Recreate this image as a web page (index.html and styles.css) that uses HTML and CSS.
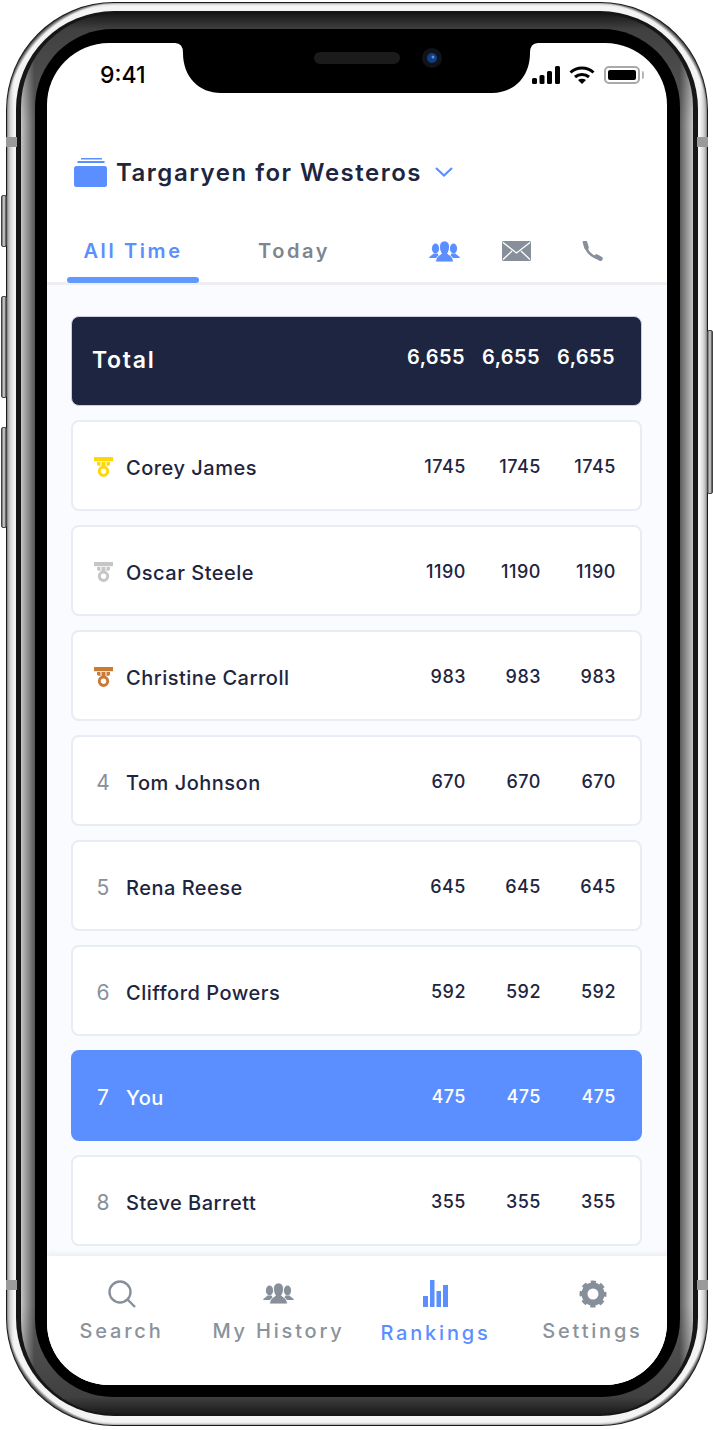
FILE: index.html
```html
<!DOCTYPE html>
<html lang="en">
<head>
  <meta charset="UTF-8">
  <meta name="viewport" content="width=device-width, initial-scale=1.0">
  <title>Rankings</title>
  <link rel="stylesheet" href="styles.css">
</head>
<body>

  <svg width="0" height="0" class="defs">
    <symbol id="group" viewBox="0 0 31 21">
      <ellipse cx="6.500" cy="7.500" rx="3.600" ry="5"/>
      <ellipse cx="24.500" cy="7.500" rx="3.600" ry="5"/>
      <path d="M0 17c.5-2 3-2.500 4.500-4.500h4l2.500 4.500z"/>
      <path d="M31 17c-.5-2-3-2.500-4.500-4.500h-4L20 17z"/>
      <path d="M15.500 0c3 0 5 2.500 5 6 0 3-1 5-2 6.500 1 1.500 5.500 2 6 8.500h-18c.5-6.500 5-7 6-8.500-1-1.500-2-3.500-2-6.500 0-3.500 2-6 5-6z" stroke="#fff" stroke-width=".9"/>
    </symbol>
    <symbol id="medal" viewBox="0 0 20 20">
      <path d="M0 0h19v4.200H0zM3 5h3.500v4C4 9 3 8.200 3 7zM7.500 5h4v4.500h-4zM12.500 5H16v2c0 1.200-1 2-3.500 2z"/>
      <circle cx="9.500" cy="14.200" r="4.200" fill="#fff" stroke="currentColor" stroke-width="3"/>
    </symbol>
  </svg>

  <div class="phone">
    <span class="side-btn btn-mute"></span>
    <span class="side-btn btn-up"></span>
    <span class="side-btn btn-down"></span>
    <span class="side-btn btn-power"></span>
    <span class="antenna ant-left-top"></span>
    <span class="antenna ant-right-top"></span>
    <span class="antenna ant-left-bottom"></span>
    <span class="antenna ant-right-bottom"></span>

    <div class="band">
      <div class="rim">
        <div class="steel">
          <div class="bezel">
            <div class="screen">

              <svg class="notch" width="363" height="50" viewBox="0 0 363 50">
                <path d="M0 0Q8 0 8 10C8 34 24 50 46 50H317C339 50 355 34 355 10Q355 0 363 0z" fill="#000"/>
                <rect x="139" y="9" width="86" height="12" rx="6" fill="#1b1b1b"/>
                <circle cx="257" cy="15" r="10" fill="#10131a"/>
                <circle cx="257" cy="15" r="5" fill="#0f3f80"/>
                <circle cx="258" cy="14" r="1.500" fill="#5f8fd0"/>
              </svg>

              <div class="status-bar">
                <span class="clock">9:41</span>
                <div class="status-icons">
                  <svg width="28" height="18" viewBox="0 0 28 18" fill="#000">
                    <rect x="0" y="12" width="5" height="6" rx="1.500"/>
                    <rect x="7.500" y="9" width="5" height="9" rx="1.500"/>
                    <rect x="15" y="5" width="5" height="13" rx="1.500"/>
                    <rect x="23" y="0" width="5" height="18" rx="1.500"/>
                  </svg>
                  <svg width="26" height="18" viewBox="0 0 26 18" fill="none" stroke="#000" stroke-width="3">
                    <path d="M1.500 6.500C8 .5 18 .5 24.500 6.500"/>
                    <path d="M6 11c4-3.500 10-3.500 14 0"/>
                    <path d="M9 14l4 4 4-4c-2.500-1.800-5.500-1.800-8 0z" fill="#000" stroke="none"/>
                  </svg>
                  <div class="battery"><span class="battery-fill"></span></div>
                </div>
              </div>

              <div class="header">
                <svg width="33" height="29" viewBox="0 0 33 29" fill="#5b8fff">
                  <rect x="7" y="0" width="21" height="1.500"/>
                  <rect x="3.500" y="3" width="27" height="2"/>
                  <rect x="0" y="8" width="33" height="21" rx="2.500"/>
                </svg>
                <h1 class="title">Targaryen for Westeros</h1>
                <svg width="18" height="10" viewBox="0 0 18 10" fill="none" stroke="#5b8fff" stroke-width="2.200">
                  <path d="M1 1l8 7.500L17 1"/>
                </svg>
              </div>

              <div class="tabs">
                <div class="tab tab-active">
                  <span class="tab-label">All Time</span>
                  <span class="tab-line"></span>
                </div>
                <div class="tab tab-today">
                  <span class="tab-label">Today</span>
                </div>
                <div class="tab-icons">
                  <svg class="icon-blue" width="31" height="21"><use href="#group"/></svg>
                  <svg width="29" height="20" viewBox="0 0 29 20">
                    <rect width="29" height="20" rx="1.500" fill="#87909a"/>
                    <path d="M1 1.500l13.500 10.500L28 1.500M1 18.500l9-8.500M28 18.500l-9-8.500" fill="none" stroke="#fff" stroke-width="1.300"/>
                  </svg>
                  <svg width="21" height="20" viewBox="0 0 21 20" fill="none" stroke="#87909a">
                    <path d="M3.500 3C3.500 10 10 16.500 17 17" stroke-width="2.600"/>
                    <path d="M3 1.500l1.500 5" stroke-width="4.500" stroke-linecap="round"/>
                    <path d="M14.500 15.500l4 2.200" stroke-width="4.500" stroke-linecap="round"/>
                  </svg>
                </div>
              </div>

              <div class="list">
                <div class="row row-total">
                  <span class="total-label">Total</span>
                  <span class="val">6,655</span><span class="val">6,655</span><span class="val">6,655</span>
                </div>
                <div class="row">
                  <svg class="rank medal-gold" width="20" height="20"><use href="#medal"/></svg>
                  <span class="name">Corey James</span>
                  <span class="val">1745</span><span class="val">1745</span><span class="val">1745</span>
                </div>
                <div class="row">
                  <svg class="rank medal-silver" width="20" height="20"><use href="#medal"/></svg>
                  <span class="name">Oscar Steele</span>
                  <span class="val">1190</span><span class="val">1190</span><span class="val">1190</span>
                </div>
                <div class="row">
                  <svg class="rank medal-bronze" width="20" height="20"><use href="#medal"/></svg>
                  <span class="name">Christine Carroll</span>
                  <span class="val">983</span><span class="val">983</span><span class="val">983</span>
                </div>
                <div class="row">
                  <span class="rank">4</span>
                  <span class="name">Tom Johnson</span>
                  <span class="val">670</span><span class="val">670</span><span class="val">670</span>
                </div>
                <div class="row">
                  <span class="rank">5</span>
                  <span class="name">Rena Reese</span>
                  <span class="val">645</span><span class="val">645</span><span class="val">645</span>
                </div>
                <div class="row">
                  <span class="rank">6</span>
                  <span class="name">Clifford Powers</span>
                  <span class="val">592</span><span class="val">592</span><span class="val">592</span>
                </div>
                <div class="row row-you">
                  <span class="rank">7</span>
                  <span class="name">You</span>
                  <span class="val">475</span><span class="val">475</span><span class="val">475</span>
                </div>
                <div class="row">
                  <span class="rank">8</span>
                  <span class="name">Steve Barrett</span>
                  <span class="val">355</span><span class="val">355</span><span class="val">355</span>
                </div>
              </div>

              <div class="tabbar">
                <div class="nav-item">
                  <svg width="28" height="28" viewBox="0 0 28 28" fill="none" stroke="#87909a" stroke-width="2.400">
                    <circle cx="12" cy="12" r="10.500"/>
                    <path d="M19.500 19.500L27 27"/>
                  </svg>
                  <span class="nav-label">Search</span>
                </div>
                <div class="nav-item">
                  <svg width="31" height="28" viewBox="0 -3 31 28" class="icon-grey"><use href="#group" width="31" height="21"/></svg>
                  <span class="nav-label">My History</span>
                </div>
                <div class="nav-item nav-active">
                  <svg width="25" height="28" viewBox="0 0 25 28" fill="#5b8fff">
                    <rect x="0" y="16" width="5" height="11"/>
                    <rect x="7" y="0" width="4.500" height="27"/>
                    <rect x="13.500" y="11" width="4.500" height="16"/>
                    <rect x="20" y="5" width="5" height="22"/>
                  </svg>
                  <span class="nav-label">Rankings</span>
                </div>
                <div class="nav-item">
                  <svg width="28" height="28" viewBox="0 0 28 28" fill="none" stroke="#87909a">
                    <circle cx="14" cy="14" r="8.500" stroke-width="6"/>
                    <circle cx="14" cy="14" r="11.500" stroke-width="4" stroke-dasharray="5.030 4" stroke-dashoffset="2.500"/>
                  </svg>
                  <span class="nav-label">Settings</span>
                </div>
              </div>

            </div>
          </div>
        </div>
      </div>
    </div>
  </div>

</body>
</html>
```

FILE: styles.css
```css
* {
  box-sizing: border-box;
}
body {
  margin: 0;
  background-color: #ffffff;
  font-family: Inter, "Open Sans", sans-serif;
  color: #1e2540;
  width: 713px;
  height: 1430px;
  overflow: hidden;
}
.defs {
  position: absolute;
}
.phone {
  position: relative;
  width: 702px;
  height: 1424px;
  margin: 2px 0 0 6px;
  padding: 1px;
  border-radius: 108px;
  background-color: #1a1a1a;
}
.band {
  height: 100%;
  padding: 8px 9px 9px 9px;
  border-radius: 107px;
  background:
    radial-gradient(circle at 120px 120px, transparent 121px, rgba(0, 0, 0, 0.9) 126px) left top / 107px 107px no-repeat,
    radial-gradient(circle at -13px 120px, transparent 121px, rgba(0, 0, 0, 0.9) 126px) right top / 107px 107px no-repeat,
    radial-gradient(circle at 120px -13px, transparent 121px, rgba(0, 0, 0, 0.9) 126px) left bottom / 107px 107px no-repeat,
    radial-gradient(circle at -13px -13px, transparent 121px, rgba(0, 0, 0, 0.9) 126px) right bottom / 107px 107px no-repeat,
    linear-gradient(90deg, #b5b5b5 0, #f4f4f4 1%, #f4f4f4 99%, #b5b5b5 100%);
  box-shadow: inset 0 0 3px #444;
}
.rim {
  height: 100%;
  padding: 3px 5px 2px 5px;
  border-radius: 98px;
  background-color: #161616;
}
.steel {
  height: 100%;
  padding: 15px 13px 17px 14px;
  border-radius: 93px;
  background:
    linear-gradient(180deg, rgba(15, 15, 15, 0.85) 0, rgba(15, 15, 15, 0.35) 15px, transparent 110px, transparent calc(100% - 110px), rgba(15, 15, 15, 0.35) calc(100% - 17px), rgba(15, 15, 15, 0.85) 100%),
    linear-gradient(90deg, #c4c4c4 0, #5a5a5a 2%, #5a5a5a 98%, #c4c4c4 100%);
}
.bezel {
  height: 100%;
  padding: 14px 13px 12px 12px;
  border-radius: 78px;
  background-color: #000;
}
.screen {
  position: relative;
  height: 100%;
  border-radius: 62px;
  overflow: hidden;
  background-color: #ffffff;
  display: flex;
  flex-direction: column;
}
.side-btn {
  position: absolute;
  background: linear-gradient(90deg, #666, #ddd 50%, #444);
  border: 1px solid #444;
  border-radius: 2px;
  width: 6px;
}
.btn-mute { left: -5px; top: 193px; height: 52px; }
.btn-up { left: -5px; top: 294px; height: 102px; }
.btn-down { left: -5px; top: 425px; height: 101px; }
.btn-power { right: -5px; top: 328px; height: 164px; }
.antenna {
  position: absolute;
  width: 11px;
  height: 10px;
  background-color: #9a9a9a;
}
.ant-left-top { left: 0; top: 135px; }
.ant-right-top { right: 0; top: 135px; }
.ant-left-bottom { left: 0; top: 1278px; }
.ant-right-bottom { right: 0; top: 1278px; }

.notch {
  position: absolute;
  left: 128px;
  top: 0;
}
.status-bar {
  height: 62px;
  padding: 19px 27px 0 53px;
  display: flex;
  justify-content: space-between;
}
.clock {
  font-size: 23px;
  font-weight: 500;
  color: #000;
  line-height: 26px;
}
.status-icons {
  display: flex;
  gap: 9px;
  height: 18px;
  margin-top: 4px;
}
.battery {
  position: relative;
  width: 36px;
  height: 18px;
  border: 2px solid #a9a9a9;
  border-radius: 5px;
  padding: 2px;
}
.battery::after {
  content: "";
  position: absolute;
  right: -6px;
  top: 3px;
  width: 2px;
  height: 8px;
  border-radius: 0 2px 2px 0;
  background-color: #b5b5b5;
}
.battery-fill {
  display: block;
  height: 100%;
  background-color: #000;
  border-radius: 2px;
}
.header {
  height: 134px;
  padding-left: 27px;
  display: flex;
  align-items: center;
}
.title {
  margin: 0 13px 0 9px;
  font-size: 24px;
  font-weight: 600;
  letter-spacing: 1.5px;
  color: #1e2540;
}
.tabs {
  height: 46px;
  padding-left: 20px;
  display: flex;
  border-bottom: 3px solid #eeeff1;
}
.tab {
  height: 44px;
  display: flex;
  flex-direction: column;
  align-items: center;
  justify-content: space-between;
  font-size: 20px;
  font-weight: 600;
  letter-spacing: 2.6px;
  color: #7d8690;
  position: relative;
}
.tab-label {
  line-height: 24px;
}
.tab-active {
  width: 132px;
  color: #5b8fff;
}
.tab-today {
  margin-left: 59px;
}
.tab-line {
  display: block;
  width: 100%;
  height: 6px;
  background-color: #6199ff;
  border-radius: 3px;
}
.tab-icons {
  margin-left: auto;
  padding: 2px 64px 0 0;
  height: 22px;
  display: flex;
  gap: 42px;
}
.tab-icons svg:last-child {
  margin-left: 9px;
}
.icon-blue {
  fill: #5b8fff;
}
.icon-grey {
  fill: #87909a;
}
.list {
  flex: 1;
  min-height: 0;
  padding: 31px 25px 0 24px;
  overflow: hidden;
  background-color: #f9fbfe;
  display: flex;
  flex-direction: column;
  gap: 14px;
}
.row {
  flex: none;
  height: 91px;
  padding: 0 24px 0 18px;
  display: flex;
  align-items: center;
  background-color: #ffffff;
  border: 2px solid #e8ecf3;
  border-radius: 8px;
}
.rank {
  flex: none;
  width: 24px;
  margin: 3px 11px 0 0;
  font-size: 21px;
  color: #87909a;
  text-align: center;
}
svg.rank {
  width: 20px;
  margin: 3px 12px 0 3px;
  fill: currentColor;
}
.medal-gold { color: #ffd60a; }
.medal-silver { color: #c6c6c6; }
.medal-bronze { color: #c97b35; }
.name {
  flex: 1;
  margin-top: 4px;
  font-size: 20px;
  font-weight: 500;
  letter-spacing: 0.5px;
  color: #1e2540;
}
.val {
  flex: none;
  width: 75px;
  margin-top: 1px;
  font-size: 18px;
  font-weight: 500;
  letter-spacing: 0.5px;
  text-align: right;
  color: #1e2540;
}
.row-total {
  height: 90px;
  background-color: #1e2540;
  border-color: #c9ced9;
  border-width: 1px;
  padding-right: 26px;
  padding-left: 20px;
}
.total-label {
  flex: 1;
  font-size: 23px;
  font-weight: 600;
  letter-spacing: 1.7px;
  color: #ffffff;
  margin-bottom: 2px;
}
.row-total .val {
  margin: 0 0 8px 0;
  font-size: 20px;
  font-weight: 600;
  letter-spacing: 0.4px;
  color: #ffffff;
}
.row-you {
  background-color: #5b8fff;
  border-color: #5b8fff;
}
.row-you .rank,
.row-you .name,
.row-you .val {
  color: #ffffff;
}
.tabbar {
  flex: none;
  height: 129px;
  margin-left: -4px;
  padding-top: 24px;
  display: grid;
  grid-template-columns: repeat(4, 157px);
  align-items: start;
  background-color: #ffffff;
  position: relative;
  box-shadow: 4px -3px 5px rgba(0, 0, 0, 0.05);
}
.nav-item {
  display: flex;
  flex-direction: column;
  align-items: center;
  gap: 11px;
  font-size: 20px;
  font-weight: 500;
  letter-spacing: 2.8px;
  color: #8a939c;
}
.nav-label {
  line-height: 24px;
}
.nav-active {
  color: #5b8fff;
}
.nav-active .nav-label {
  margin-top: 2px;
}
```
